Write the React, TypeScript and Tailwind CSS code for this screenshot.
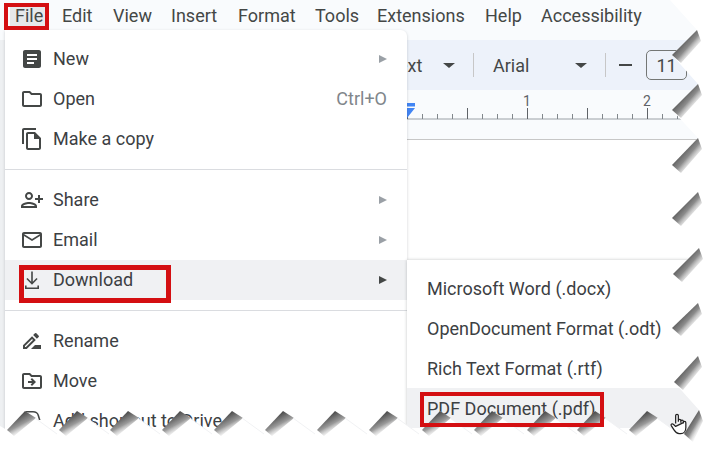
import React from "react";

const font = { fontFamily: "Roboto, 'Liberation Sans', sans-serif" };

const Ic = ({ d, cls = "" }: { d: string; cls?: string }) => (
  <svg viewBox="0 0 24 24" className={`w-6 h-6 fill-[#444746] shrink-0 ${cls}`}>
    <path d={d} />
  </svg>
);

const icons = {
  doc: "M19 3H5c-1.1 0-2 .9-2 2v14c0 1.1.9 2 2 2h14c1.1 0 2-.9 2-2V5c0-1.1-.9-2-2-2zm-5 14H7v-2h7v2zm3-4H7v-2h10v2zm0-4H7V7h10v2z",
  folder: "M9.17 6l2 2H20v10H4V6h5.17M10 4H4c-1.1 0-1.99.9-1.99 2L2 18c0 1.1.9 2 2 2h16c1.1 0 2-.9 2-2V8c0-1.1-.9-2-2-2h-8l-2-2z",
  copy: "M16 1H4c-1.1 0-2 .9-2 2v14h2V3h12V1zm-1 4H8c-1.1 0-1.99.9-1.99 2L6 21c0 1.1.89 2 1.99 2H19c1.1 0 2-.9 2-2V11l-6-6zM8 21V7h6v5h5v9H8z",
  share: "M15 12c2.21 0 4-1.79 4-4s-1.79-4-4-4-4 1.79-4 4 1.79 4 4 4zm0-6c1.1 0 2 .9 2 2s-.9 2-2 2-2-.9-2-2 .9-2 2-2zm0 8c-2.67 0-8 1.34-8 4v2h16v-2c0-2.66-5.33-4-8-4zm-6 4c.22-.72 3.31-2 6-2 2.7 0 5.8 1.29 6 2H9zm-3-3v-3h3v-2H6V7H4v3H1v2h3v3h2z",
  mail: "M20 4H4c-1.1 0-1.99.9-1.99 2L2 18c0 1.1.9 2 2 2h16c1.1 0 2-.9 2-2V6c0-1.1-.9-2-2-2zm0 14H4V8l8 5 8-5v10zm-8-7L4 6h16l-8 5z",
  download: "M11.2 3.500h1.600v10.200l3.700-3.700 1.100 1.100-5.600 5.600-5.600-5.600 1.100-1.100 3.700 3.700V3.500zM5 17.500h1.600v2h10.800v-2H19v3.600H5v-3.600z",
  rename: "M15 16l-4 4h10v-4h-6zM12.06 7.19 3 16.25V20h3.75l9.06-9.06-3.75-3.75zM5.92 18H5v-.92l7.06-7.06.92.92L5.92 18zM18.71 8.04c.39-.39.39-1.02 0-1.41l-2.34-2.34a1 1 0 0 0-1.41 0l-1.83 1.83 3.75 3.75 1.83-1.83z",
  move: "M20 6h-8l-2-2H4c-1.1 0-2 .9-2 2v12c0 1.1.9 2 2 2h16c1.1 0 2-.9 2-2V8c0-1.1-.9-2-2-2zm0 12H4V6h5.17l2 2H20v10zm-8.01-9l-1.41 1.41L12.16 12H8v2h4.16l-1.59 1.59L11.99 17 16 13.01 11.99 9z",
  shortcut: "M6 2h7c3 0 5 1.500 6 4l1.500 5h-1.600l-1.400-4.500C17 4.500 15.500 3.600 13 3.600H6.500L5 9H3.400L5 3.500C5.200 2.600 5.500 2 6 2z",
};

const Arrow = ({ dark }: { dark?: boolean }) => (
  <span className={`w-0 h-0 border-y-[4px] border-y-transparent border-l-[8px] ${dark ? "border-l-[#444746]" : "border-l-[#9aa0a6]"}`} />
);

const Row = ({ icon, label, arrow, short, hl, flip, dark }: { icon: string; label: string; arrow?: boolean; short?: string; hl?: boolean; flip?: boolean; dark?: boolean }) => (
  <div className={`h-10 flex items-center pl-[15px] pr-[20px] ${hl ? "bg-[#f0f1f3]" : ""}`}>
    <Ic d={icon} cls={flip ? "-scale-x-100" : ""} />
    <span className="ml-[9px] flex-1 pb-[2px] text-[18px] text-[#3c4043]">{label}</span>
    {short && <span className="pb-[2px] text-[18px] text-[#80868b]">{short}</span>}
    {arrow && <Arrow dark={dark} />}
  </div>
);

const Caret = () => <span className="w-0 h-0 border-x-[6px] border-x-transparent border-t-[5px] border-t-[#444746]" />;

const rightTeeth: [number, number, number, number][] = [
  [697, 30, 672, 55],
  [698, 84, 672, 110],
  [698, 138, 672, 165],
  [698, 192, 672, 218],
  [699, 248, 673, 274],
  [698, 303, 672, 328],
  [698, 356, 674, 382],
  [699, 410, 684, 434],
];
const peaks = [25, 77, 128, 180, 232, 283, 335, 387, 440, 492, 545, 595, 647];

const outline = () => {
  const pts: string[] = ["670,0"];
  rightTeeth.forEach(([a, b, c, d]) => {
    pts.push(`${a},${b}`, `${c},${d}`);
  });
  [...peaks].reverse().forEach((p) => {
    pts.push(`${p + 32},434`, `${p},411`);
  });
  pts.push("7,430", "0,426", "0,451", "711,451", "711,0");
  return pts.join(" ");
};

const Torn = () => (
  <svg viewBox="0 0 711 451" className="absolute inset-0 w-[711px] h-[451px] pointer-events-none">
    <defs>
      <linearGradient id="shb" x1="0.38" y1="0.12" x2="0.82" y2="0.82">
        <stop offset="0.05" stopColor="#4a4a4a" />
        <stop offset="0.5" stopColor="#9a9a9a" />
        <stop offset="1" stopColor="#fff" stopOpacity="0" />
      </linearGradient>
      <linearGradient id="shr" x1="0.25" y1="0.25" x2="0.8" y2="0.8">
        <stop offset="0.05" stopColor="#444" />
        <stop offset="0.5" stopColor="#8c8c8c" />
        <stop offset="1" stopColor="#fff" stopOpacity="0" />
      </linearGradient>
      <filter id="bl"><feGaussianBlur stdDeviation="0.6" /></filter>
    </defs>
    <polygon points={outline()} fill="#fff" />
    <g filter="url(#bl)">
      {rightTeeth.map(([a, b, c, d], i) => (
        <polygon key={i} points={`${a},${b} ${a + 4},${b + 11} ${c + 9},${d + 8} ${c},${d}`} fill="url(#shr)" />
      ))}
      {peaks.map((p, i) => (
        <polygon key={i} points={`${p},411 ${p + 11},418 ${p - 11},436 ${p - 18},430`} fill="url(#shb)" />
      ))}
    </g>
    {peaks.map((p, i) => (
      <line key={i} x1={p + 10} y1={418} x2={p + 32} y2={434} stroke="#f1f2f4" strokeWidth="1" />
    ))}
  </svg>
);

const Ruler = () => {
  const ticks = Array.from({ length: 20 }, (_, i) => 407 + i * 15);
  return (
    <svg viewBox="0 0 711 30" className="absolute inset-0 w-[711px] h-[30px]">
      <line x1="407" y1="29" x2="690" y2="29" stroke="#9aa0a6" />
      {ticks.map((x, i) => (
        <line key={i} x1={x + 0.5} y1={(x - 407) % 60 === 0 ? 18 : 24} x2={x + 0.5} y2="29" stroke={(x - 407) % 60 === 0 ? "#5f6368" : "#80868b"} />
      ))}
      <path d="M407 13h8v3.5h-8zM407 18h8l-8 10z" fill="#4285f4" />
    </svg>
  );
};

export default function App() {
  return (
    <div style={font} className="relative w-[711px] h-[451px] overflow-hidden bg-white">
      <div className="h-10 pt-[4px] pl-[10px] flex items-start bg-[#f9fbfd] text-[18px] text-[#444746] leading-[24px]">
        <span className="w-[52px] pl-[5px] relative"><span className="absolute left-0 top-0 w-[36px] h-[23px] bg-[#e6e8ea]" /><span className="relative">File</span></span>
        <span className="w-[51px]">Edit</span>
        <span className="w-[58px]">View</span>
        <span className="w-[67px]">Insert</span>
        <span className="w-[77px]">Format</span>
        <span className="w-[62px]">Tools</span>
        <span className="w-[108px]">Extensions</span>
        <span className="w-[56px]">Help</span>
        <span>Accessibility</span>
      </div>
      <div className="h-[50px] bg-[#edf2fa] flex items-center pl-[398px] text-[18px] text-[#444746]">
        <span className="w-[45px]">ext</span>
        <Caret />
        <span className="ml-[18px] w-px h-6 bg-[#c7c7c7]" />
        <span className="ml-[19px] w-[82px]">Arial</span>
        <Caret />
        <span className="ml-[18px] w-px h-6 bg-[#c7c7c7]" />
        <span className="ml-[13px] w-[13px] h-[2px] bg-[#444746]" />
        <span className="ml-[14px] w-[41px] h-[30px] border border-[#747775] rounded-[5px] flex items-center justify-center">11</span>
      </div>
      <div className="relative h-[30px] bg-[#f9fbfd]">
        <Ruler />
        <span className="absolute left-[523px] top-[1px] text-[14px] text-[#5f6368]">1</span>
        <span className="absolute left-[643px] top-[1px] text-[14px] text-[#5f6368]">2</span>
      </div>
      <div className="h-5 bg-[#f9fbfd] border-b border-[#c7c7c7]" />

      <div className="absolute left-0 top-10 w-[5px] h-[411px] bg-[#eef0f2]" />

      <div className="absolute left-[5px] top-[30px] w-[402px] h-[421px] bg-white rounded-tr-[6px] pt-[9px] shadow-[0_1px_3px_rgba(60,64,67,0.25)]">
        <Row icon={icons.doc} label="New" arrow />
        <Row icon={icons.folder} label="Open" short="Ctrl+O" />
        <Row icon={icons.copy} label="Make a copy" />
        <div className="my-[10px] h-px bg-[#dadce0]" />
        <Row icon={icons.share} label="Share" arrow flip />
        <Row icon={icons.mail} label="Email" arrow />
        <Row icon={icons.download} label="Download" arrow hl dark />
        <div className="my-[10px] h-px bg-[#dadce0]" />
        <Row icon={icons.rename} label="Rename" />
        <Row icon={icons.move} label="Move" />
        <Row icon={icons.shortcut} label="Add shortcut to Drive" />
      </div>

      <div className="absolute left-[407px] top-[260px] w-[304px] h-[191px] bg-white pt-[8px] text-[18px] text-[#3c4043] shadow-[0_0_3px_rgba(60,64,67,0.3)]">
        <div className="h-10 flex items-center pl-5">Microsoft Word (.docx)</div>
        <div className="h-10 flex items-center pl-5">OpenDocument Format (.odt)</div>
        <div className="h-10 flex items-center pl-5">Rich Text Format (.rtf)</div>
        <div className="h-10 flex items-center pl-5 bg-[#f0f1f3]">PDF Document (.pdf)</div>
      </div>

      <Torn />

      <div className="absolute left-[4px] top-[3px] w-[45px] h-[27px] border-[4px] border-[#d40f12]" />
      <div className="absolute left-[19px] top-[265px] w-[152px] h-[38px] border-[5px] border-[#d40f12]" />
      <div className="absolute left-[420px] top-[392px] w-[184px] h-[35px] border-[4px] border-[#d40f12]" />

      <svg viewBox="0 0 24 28" className="absolute left-[669px] top-[411px] w-[20px] h-[25px]">
        <path
          d="M8 14V4.500a1.600 1.600 0 0 1 3.200 0V12m0-1.500a1.500 1.500 0 0 1 3 0V13m0-1.500a1.500 1.500 0 0 1 3 0V14m0-1a1.500 1.500 0 0 1 3 0v6c0 4-2.500 7-6 7h-2c-3 0-4.500-1.500-6-4l-3.500-5.500c-.8-1.500 1.200-2.800 2.500-1.500L8 17.500z"
          fill="#fff"
          stroke="#222"
          strokeWidth="1.500"
          strokeLinejoin="round"
        />
      </svg>
    </div>
  );
}
